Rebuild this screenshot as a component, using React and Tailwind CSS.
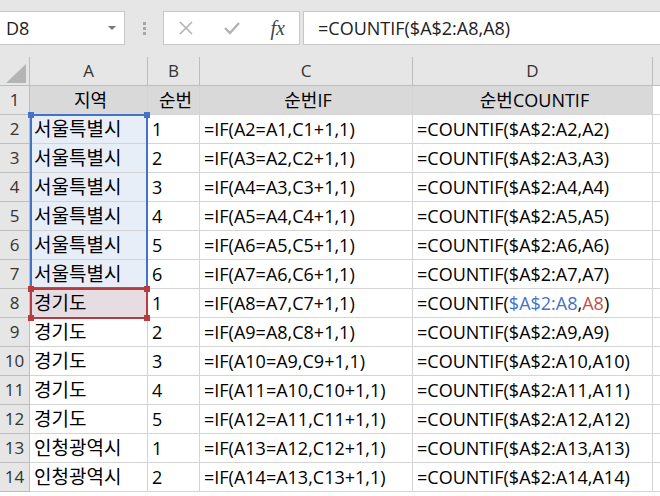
import React from 'react';

const font = { fontFamily: '"Open Sans", "Noto Sans CJK KR", sans-serif' };

const rows = [];
for (let r = 2; r <= 14; r++) {
  const area = r <= 7 ? '서울특별시' : r <= 12 ? '경기도' : '인청광역시';
  const start = r <= 7 ? 2 : r <= 12 ? 8 : 13;
  rows.push({
    r,
    area,
    n: r - start + 1,
    c: `=IF(A${r}=A${r - 1},C${r - 1}+1,1)`,
    d: `=COUNTIF($A$2:A${r},A${r})`,
  });
}

function Toolbar() {
  return (
    <div className="h-[57px] bg-[#e6e6e6] flex items-start pt-[11px]">
      <div className="w-[125px] h-[34px] bg-white border border-[#c6c6c6] border-l-0 flex items-center justify-between pl-[6px] pr-[8px] text-[18px] text-[#222]">
        <span>D8</span>
        <span className="w-0 h-0 border-l-[4px] border-r-[4px] border-t-[4px] border-l-transparent border-r-transparent border-t-[#777]" />
      </div>
      <div className="w-[38px] h-[34px] flex flex-col items-center justify-center gap-[2px]">
        <span className="w-[3px] h-[3px] bg-[#a6a6a6]" />
        <span className="w-[3px] h-[3px] bg-[#a6a6a6]" />
        <span className="w-[3px] h-[3px] bg-[#a6a6a6]" />
      </div>
      <div className="w-[137px] h-[34px] bg-white border border-[#c6c6c6] flex items-center justify-between px-[14px]">
        <svg width="16" height="16" viewBox="0 0 16 16">
          <path d="M2 2 L14 14 M14 2 L2 14" stroke="#b3b3b3" strokeWidth="1.6" />
        </svg>
        <svg width="18" height="16" viewBox="0 0 18 16">
          <path d="M2 8 L7 13 L16 3" stroke="#b3b3b3" strokeWidth="2.4" fill="none" />
        </svg>
        <span className="text-[20px] italic text-[#444] leading-none" style={{ fontFamily: '"Liberation Serif", serif' }}>
          fx
        </span>
      </div>
      <div className="ml-[3px] flex-1 h-[34px] bg-white border border-[#c6c6c6] border-r-0 flex items-center pl-[14px] text-[18px] text-[#222]">
        =COUNTIF($A$2:A8,A8)
      </div>
    </div>
  );
}

const cols = 'grid-cols-[30px_118px_52px_213px_240px_1fr]';

function HeadCell({ children, className = '' }) {
  return (
    <div className={`h-[29px] bg-[#e6e6e6] border-r border-b border-[#bdbdbd] flex items-center justify-center text-[17px] text-[#333] ${className}`}>
      {children}
    </div>
  );
}

function Cell({ children, className = '' }) {
  return (
    <div className={`h-[29px] border-r border-b border-[#d4d4d4] flex items-center pl-[4px] text-[18px] text-black whitespace-nowrap overflow-hidden ${className}`}>
      {children}
    </div>
  );
}

function Handle({ className, color }) {
  return <span className={`absolute w-[6px] h-[6px] ${color} ${className}`} />;
}

export default function App() {
  return (
    <div className="w-[660px] h-[496px] overflow-hidden bg-white" style={font}>
      <Toolbar />
      <div className="relative">
        <div className={`grid ${cols}`}>
          <div className="h-[29px] bg-[#e6e6e6] border-r border-b border-[#bdbdbd] relative">
            <svg className="absolute left-[6px] top-[7px]" width="20" height="19" viewBox="0 0 20 19">
              <path d="M20 0 L20 19 L0 19 Z" fill="#b4b4b4" />
            </svg>
          </div>
          <HeadCell>A</HeadCell>
          <HeadCell>B</HeadCell>
          <HeadCell>C</HeadCell>
          <HeadCell>D</HeadCell>
          <HeadCell className="border-r-0" />

          <HeadCell>1</HeadCell>
          <Cell className="bg-[#d9d9d9] justify-center pl-0">지역</Cell>
          <Cell className="bg-[#d9d9d9] justify-center pl-0">순번</Cell>
          <Cell className="bg-[#d9d9d9] justify-center pl-0">순번IF</Cell>
          <Cell className="bg-[#d9d9d9] justify-center pl-0">순번COUNTIF</Cell>
          <Cell className="border-r-0" />

          {rows.map((row) => (
            <React.Fragment key={row.r}>
              <HeadCell>{row.r}</HeadCell>
              <Cell className={row.r <= 7 ? 'bg-[#e8eef8] text-[19px]' : row.r === 8 ? 'bg-[#e6dde3] text-[19px]' : 'text-[19px]'}>{row.area}</Cell>
              <Cell>{row.n}</Cell>
              <Cell>{row.c}</Cell>
              <Cell>
                {row.r === 8 ? (
                  <>
                    =COUNTIF(<span className="text-[#4472c4]">$A$2:A8</span>,<span className="text-[#c0504d]">A8</span>)
                  </>
                ) : (
                  row.d
                )}
              </Cell>
              <Cell className="border-r-0" />
            </React.Fragment>
          ))}
        </div>

        {/* reference highlight A2:A7 */}
        <div className="absolute left-[30px] top-[57px] w-[118px] h-[175px] border-2 border-[#4472c4] pointer-events-none">
          <Handle color="bg-[#4472c4]" className="-left-[4px] -top-[4px]" />
          <Handle color="bg-[#4472c4]" className="-right-[4px] -top-[4px]" />
        </div>
        {/* reference highlight A8 */}
        <div className="absolute left-[30px] top-[231px] w-[118px] h-[31px] border-2 border-[#b83b40] pointer-events-none">
          <Handle color="bg-[#b83b40]" className="-left-[4px] -top-[4px]" />
          <Handle color="bg-[#b83b40]" className="-right-[4px] -top-[4px]" />
          <Handle color="bg-[#b83b40]" className="-left-[4px] -bottom-[4px]" />
          <Handle color="bg-[#b83b40]" className="-right-[4px] -bottom-[4px]" />
        </div>
      </div>
    </div>
  );
}
